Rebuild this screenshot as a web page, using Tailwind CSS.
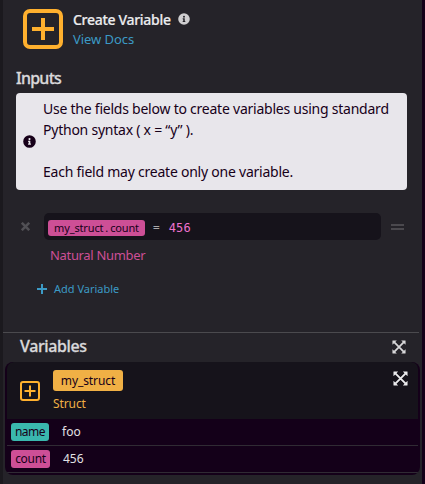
<!DOCTYPE html>
<html lang="en">
<head>
<meta charset="utf-8">
<title>Create Variable</title>
<script src="https://cdn.jsdelivr.net/npm/@tailwindcss/browser@4"></script>
</head>
<body class="w-[425px] h-[484px] overflow-hidden bg-[#252329] font-['Noto_Sans','Open_Sans',sans-serif] whitespace-nowrap">
<svg class="hidden">
  <symbol id="info" viewBox="0 0 512 512"><path fill="currentColor" fill-rule="evenodd" d="M256 8a248 248 0 1 0 0 496 248 248 0 0 0 0-496Zm0 110a42 42 0 1 1 0 84 42 42 0 0 1 0-84Zm56 254c0 7-5 12-12 12h-88c-7 0-12-5-12-12v-24c0-7 5-12 12-12h12v-64h-12c-7 0-12-5-12-12v-24c0-7 5-12 12-12h64c7 0 12 5 12 12v100h12c7 0 12 5 12 12v24Z"/></symbol>
  <symbol id="expand" viewBox="0 0 16 16"><path fill="currentColor" d="M.8.5h4.700L.5 5.500V.8ZM10.500.5h4.700l.3.3v4.700ZM.5 10.500l5 5H.8l-.3-.3ZM15.500 10.500v4.700l-.3.300h-4.700Z"/><path stroke="currentColor" stroke-width="2" d="M2.500 2.500l11 11M13.500 2.500l-11 11"/></symbol>
</svg>
<div class="flex h-full border-l-[3px] border-r-[3px] border-l-[#1b191e] border-r-[#140019]">
  <main class="flex w-full flex-col">
    <header class="flex h-[49px] pl-5 pt-[9px]">
      <svg class="h-10 w-10" viewBox="0 0 40 40" fill="none" stroke="#ffb02e"><rect x="2" y="2" width="36" height="36" rx="5" stroke-width="4"/><path d="M20 9v22M9 20h22" stroke-width="4"/></svg>
      <div class="ml-[10px]">
        <div class="flex h-[20px] items-center"><span class="w-[99px] text-[14px] font-medium tracking-[-0.3px] text-[#ececee] [-webkit-text-stroke:0.2px]">Create Variable</span><svg class="ml-[6px] h-3 w-3 text-[#cfced0]"><use href="#info"/></svg></div>
        <div class="h-5 text-[13px] leading-5 tracking-[-0.05px] text-[#3c9ac5]">View Docs</div>
      </div>
    </header>
    <h2 class="mt-[19px] h-[25px] pl-[13px] text-[16px] font-medium leading-[21px] tracking-[-0.75px] text-[#d9d8da] [-webkit-text-stroke:0.3px]">Inputs</h2>
    <section class="ml-[13px] flex h-[97px] w-[391px] items-center rounded-[4px] bg-[#e8e6eb] pl-[7px] text-[#170019]">
      <svg class="h-[13px] w-[13px]"><use href="#info"/></svg>
      <p class="ml-[7px] pb-[4px] text-[14px] leading-[21px] tracking-[-0.235px]">Use the fields below to create variables using standard<br>Python syntax ( x = “y” ).<br><br>Each field may create only one variable.</p>
    </section>
    <div class="mt-[23px] flex h-[27px] items-center">
      <svg class="ml-[18px] h-[9px] w-[9px]" viewBox="0 0 9 9" stroke="#515055" stroke-width="2.500"><path d="M.8.8l7.400 7.400M8.200.8L.8 8.200"/></svg>
      <div class="ml-[14px] flex h-[27px] w-[337px] items-center rounded-[5px] bg-[#16131b] pl-1 pt-[3px]">
        <span class="flex h-4 w-[97px] items-center justify-center rounded-[3px] bg-[#cd4f96] text-[11px] tracking-[-0.150px] text-[#170019]">my_struct<span class="px-[2px]">.</span>count</span>
        <span class="ml-2 font-['DejaVu_Sans_Mono',monospace] text-[11px] leading-4 text-[#aaa9ac]">=</span>
        <span class="ml-[9px] font-['DejaVu_Sans_Mono',monospace] text-[12px] leading-4 tracking-[0.250px] text-[#ee72ce]">456</span>
      </div>
      <svg class="ml-[10px] h-[6px] w-[13px]" viewBox="0 0 13 6" fill="#4b494e"><path d="M0 0h13v2H0zM0 4h13v2H0z"/></svg>
    </div>
    <div class="h-[31px] pl-[47px] pt-[5px] text-[13px] leading-5 tracking-[-0.33px] text-[#cd4f96]">Natural Number</div>
    <div class="mt-[8px] flex h-5 items-center pl-[34px] text-[11px] text-[#3c9ac5]"><svg class="mr-[7px] h-[10px] w-[10px]" viewBox="0 0 10 10" stroke="currentColor" stroke-width="2"><path d="M5 0v10M0 5h10"/></svg><span>Add Variable</span></div>
    <div class="mt-[33px] flex h-[30px] w-[416px] items-center justify-between border-t border-[#4b4a4e] pl-[17px] pr-[13px]">
      <h2 class="mt-[-3px] text-[16px] font-medium tracking-[-0.38px] text-[#d9d8da] [-webkit-text-stroke:0.3px]">Variables</h2>
      <svg class="mt-[-2px] h-[14px] w-[14px] text-[#d9d8da]"><use href="#expand"/></svg>
    </div>
    <section class="ml-[2px] h-[113px] w-[415px] overflow-hidden rounded-[8px] bg-[#140019] px-[2px]">
      <div class="flex h-[57px] rounded-t-[7px] bg-[#16131b]">
        <svg class="ml-[13px] mt-[19px] h-5 w-5" viewBox="0 0 20 20" fill="none" stroke="#ffb02e" stroke-width="2"><rect x="1" y="1" width="18" height="18" rx="2"/><path d="M10 4.500v11M4.500 10h11"/></svg>
        <div class="ml-[13px] pt-2">
          <div class="flex h-[21px] w-[70px] items-center justify-center rounded-[3px] bg-[#f0b045] text-[12px] tracking-[-0.1px] text-[#170019]">my_struct</div>
          <div class="mt-[3px] text-[12px] leading-5 tracking-[-0.1px] text-[#f0b045]">Struct</div>
        </div>
        <svg class="ml-auto mr-[10px] mt-[9px] h-[15px] w-[15px] text-[#ececee]"><use href="#expand"/></svg>
      </div>
      <div class="flex h-[27px] items-center border-b border-[#302b34] pl-1 text-[12px]"><span class="flex h-[18px] w-[38px] items-center justify-center rounded-[3px] bg-[#3ab7ae] pb-px tracking-[-0.500px] text-[#170019]">name</span><span class="ml-[13px] text-[#e2e0e4]">foo</span></div>
      <div class="flex h-[27px] items-center border-b border-[#302b34] pl-1 text-[12px]"><span class="flex h-[18px] w-[39px] items-center justify-center rounded-[3px] bg-[#cd4f96] pb-px tracking-[-0.300px] text-[#170019]">count</span><span class="ml-[13px] text-[#e2e0e4]">456</span></div>
    </section>
  </main>
</div>
</body>
</html>
